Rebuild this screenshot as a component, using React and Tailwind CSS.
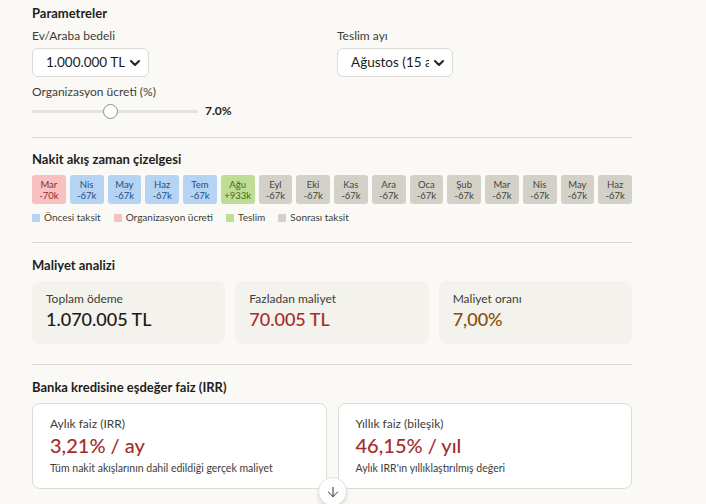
import { ChevronDown, ArrowDown } from 'lucide-react';

const months = [
  { m: 'Mar', v: '-70k', t: 'fee' },
  { m: 'Nis', v: '-67k', t: 'pre' },
  { m: 'May', v: '-67k', t: 'pre' },
  { m: 'Haz', v: '-67k', t: 'pre' },
  { m: 'Tem', v: '-67k', t: 'pre' },
  { m: 'Ağu', v: '+933k', t: 'del' },
  { m: 'Eyl', v: '-67k', t: 'post' },
  { m: 'Eki', v: '-67k', t: 'post' },
  { m: 'Kas', v: '-67k', t: 'post' },
  { m: 'Ara', v: '-67k', t: 'post' },
  { m: 'Oca', v: '-67k', t: 'post' },
  { m: 'Şub', v: '-67k', t: 'post' },
  { m: 'Mar', v: '-67k', t: 'post' },
  { m: 'Nis', v: '-67k', t: 'post' },
  { m: 'May', v: '-67k', t: 'post' },
  { m: 'Haz', v: '-67k', t: 'post' },
];

const chipStyles = {
  fee: 'bg-[#f7c1c1] text-[#8f2d2a]',
  pre: 'bg-[#b5d4f4] text-[#1f4e86]',
  del: 'bg-[#c0dd97] text-[#3b6d11]',
  post: 'bg-[#d3d1c7] text-[#444441]',
};

const Select = ({ value, width }) => (
  <div className={`flex items-center h-[29px] ${width} bg-white border border-[#dcdad4] rounded-md pl-[13px] pr-[5px]`}>
    <span className="flex-1 text-[13.5px] text-[#1a1a1a] whitespace-nowrap overflow-hidden">{value}</span>
    <ChevronDown className="ml-[2px] w-4 h-4 stroke-[3] text-[#222] shrink-0" />
  </div>
);

const App = () => {
  return (
    <div className="w-[706px] h-[504px] overflow-hidden bg-[#faf9f5] font-['Lato',sans-serif] text-[#1f1e1d]">
      <div className="w-[600px] ml-[32px] pt-[5px]">
        {/* Parametreler */}
        <h2 className="text-[13px] font-bold leading-[16px]">Parametreler</h2>
        <div className="flex mt-[8px]">
          <div className="w-[305px]">
            <p className="text-[12px] text-[#3d3d3a] leading-[14px]">Ev/Araba bedeli</p>
            <div className="mt-[5px]">
              <Select value="1.000.000 TL" width="w-[117px]" />
            </div>
          </div>
          <div>
            <p className="text-[12px] text-[#3d3d3a] leading-[14px]">Teslim ayı</p>
            <div className="mt-[5px]">
              <Select value="Ağustos (15 ay)" width="w-[116px]" />
            </div>
          </div>
        </div>
        <p className="text-[12px] text-[#3d3d3a] leading-[14px] mt-[8px]">Organizasyon ücreti (%)</p>
        <div className="flex items-center mt-[4px] h-[16px]">
          <div className="relative w-[166px] h-[3px] bg-[#e4e2dc] rounded-full">
            <div className="absolute left-[71px] top-[-6px] w-[15px] h-[15px] rounded-full bg-white border border-[#8e8c86]" />
          </div>
          <span className="ml-[7px] text-[12px] font-bold">7.0%</span>
        </div>

        <hr className="mt-[18px] border-[#d9d7d0]" />

        {/* Timeline */}
        <h2 className="text-[13px] font-bold leading-[16px] mt-[13px]">Nakit akış zaman çizelgesi</h2>
        <div className="flex gap-[4px] mt-[8px]">
          {months.map((c, i) => (
            <div
              key={i}
              className={`flex-1 h-[29px] rounded-[3px] flex flex-col items-center justify-center text-[9.5px] leading-[11px] ${chipStyles[c.t]}`}
            >
              <span>{c.m}</span>
              <span>{c.v}</span>
            </div>
          ))}
        </div>
        <div className="flex items-center gap-[13px] mt-[6px] text-[10px] text-[#3d3d3a]">
          <div className="flex items-center gap-[4px]"><span className="w-[8px] h-[8px] rounded-[1px] bg-[#b5d4f4]" />Öncesi taksit</div>
          <div className="flex items-center gap-[4px]"><span className="w-[8px] h-[8px] rounded-[1px] bg-[#f7c1c1]" />Organizasyon ücreti</div>
          <div className="flex items-center gap-[4px]"><span className="w-[8px] h-[8px] rounded-[1px] bg-[#c0dd97]" />Teslim</div>
          <div className="flex items-center gap-[4px]"><span className="w-[8px] h-[8px] rounded-[1px] bg-[#d3d1c7]" />Sonrası taksit</div>
        </div>

        <hr className="mt-[17px] border-[#d9d7d0]" />

        {/* Maliyet analizi */}
        <h2 className="text-[13px] font-bold leading-[16px] mt-[14px]">Maliyet analizi</h2>
        <div className="grid grid-cols-3 gap-[10px] mt-[8px]">
          <div className="h-[63px] bg-[#f3f2ec] rounded-lg px-[14px] pt-[11px]">
            <p className="text-[12px] text-[#3d3d3a] leading-[14px]">Toplam ödeme</p>
            <p className="text-[18px] font-medium leading-[22px] mt-[2px] text-[#1a1a1a]">1.070.005 TL</p>
          </div>
          <div className="h-[63px] bg-[#f3f2ec] rounded-lg px-[14px] pt-[11px]">
            <p className="text-[12px] text-[#3d3d3a] leading-[14px]">Fazladan maliyet</p>
            <p className="text-[18px] font-medium leading-[22px] mt-[2px] text-[#a32d2d]">70.005 TL</p>
          </div>
          <div className="h-[63px] bg-[#f3f2ec] rounded-lg px-[14px] pt-[11px]">
            <p className="text-[12px] text-[#3d3d3a] leading-[14px]">Maliyet oranı</p>
            <p className="text-[18px] font-medium leading-[22px] mt-[2px] text-[#854f0b]">7,00%</p>
          </div>
        </div>

        <hr className="mt-[20px] border-[#d9d7d0]" />

        {/* IRR */}
        <h2 className="text-[13px] font-bold leading-[16px] mt-[14px]">Banka kredisine eşdeğer faiz (IRR)</h2>
        <div className="relative grid grid-cols-2 gap-[11px] mt-[8px]">
          <div className="h-[86px] bg-white border border-[#dedcd6] rounded-lg px-[17px] pt-[13px]">
            <p className="text-[12px] text-[#3d3d3a] leading-[14px]">Aylık faiz (IRR)</p>
            <p className="text-[20px] font-medium leading-[24px] mt-[2px] text-[#a32d2d]">3,21% / ay</p>
            <p className="text-[10.5px] text-[#3d3d3a] leading-[12px] mt-[5px]">Tüm nakit akışlarının dahil edildiği gerçek maliyet</p>
          </div>
          <div className="h-[86px] bg-white border border-[#dedcd6] rounded-lg px-[17px] pt-[13px]">
            <p className="text-[12px] text-[#3d3d3a] leading-[14px]">Yıllık faiz (bileşik)</p>
            <p className="text-[20px] font-medium leading-[24px] mt-[2px] text-[#a32d2d]">46,15% / yıl</p>
            <p className="text-[10.5px] text-[#3d3d3a] leading-[12px] mt-[5px]">Aylık IRR'ın yıllıklaştırılmış değeri</p>
          </div>
          <div className="absolute left-[286px] top-[74px] w-[29px] h-[29px] rounded-full bg-white border border-[#e2e0da] shadow-md flex items-center justify-center">
            <ArrowDown className="w-4 h-4 text-[#333] stroke-[1.5]" />
          </div>
        </div>
      </div>
    </div>
  );
};

export default App;
